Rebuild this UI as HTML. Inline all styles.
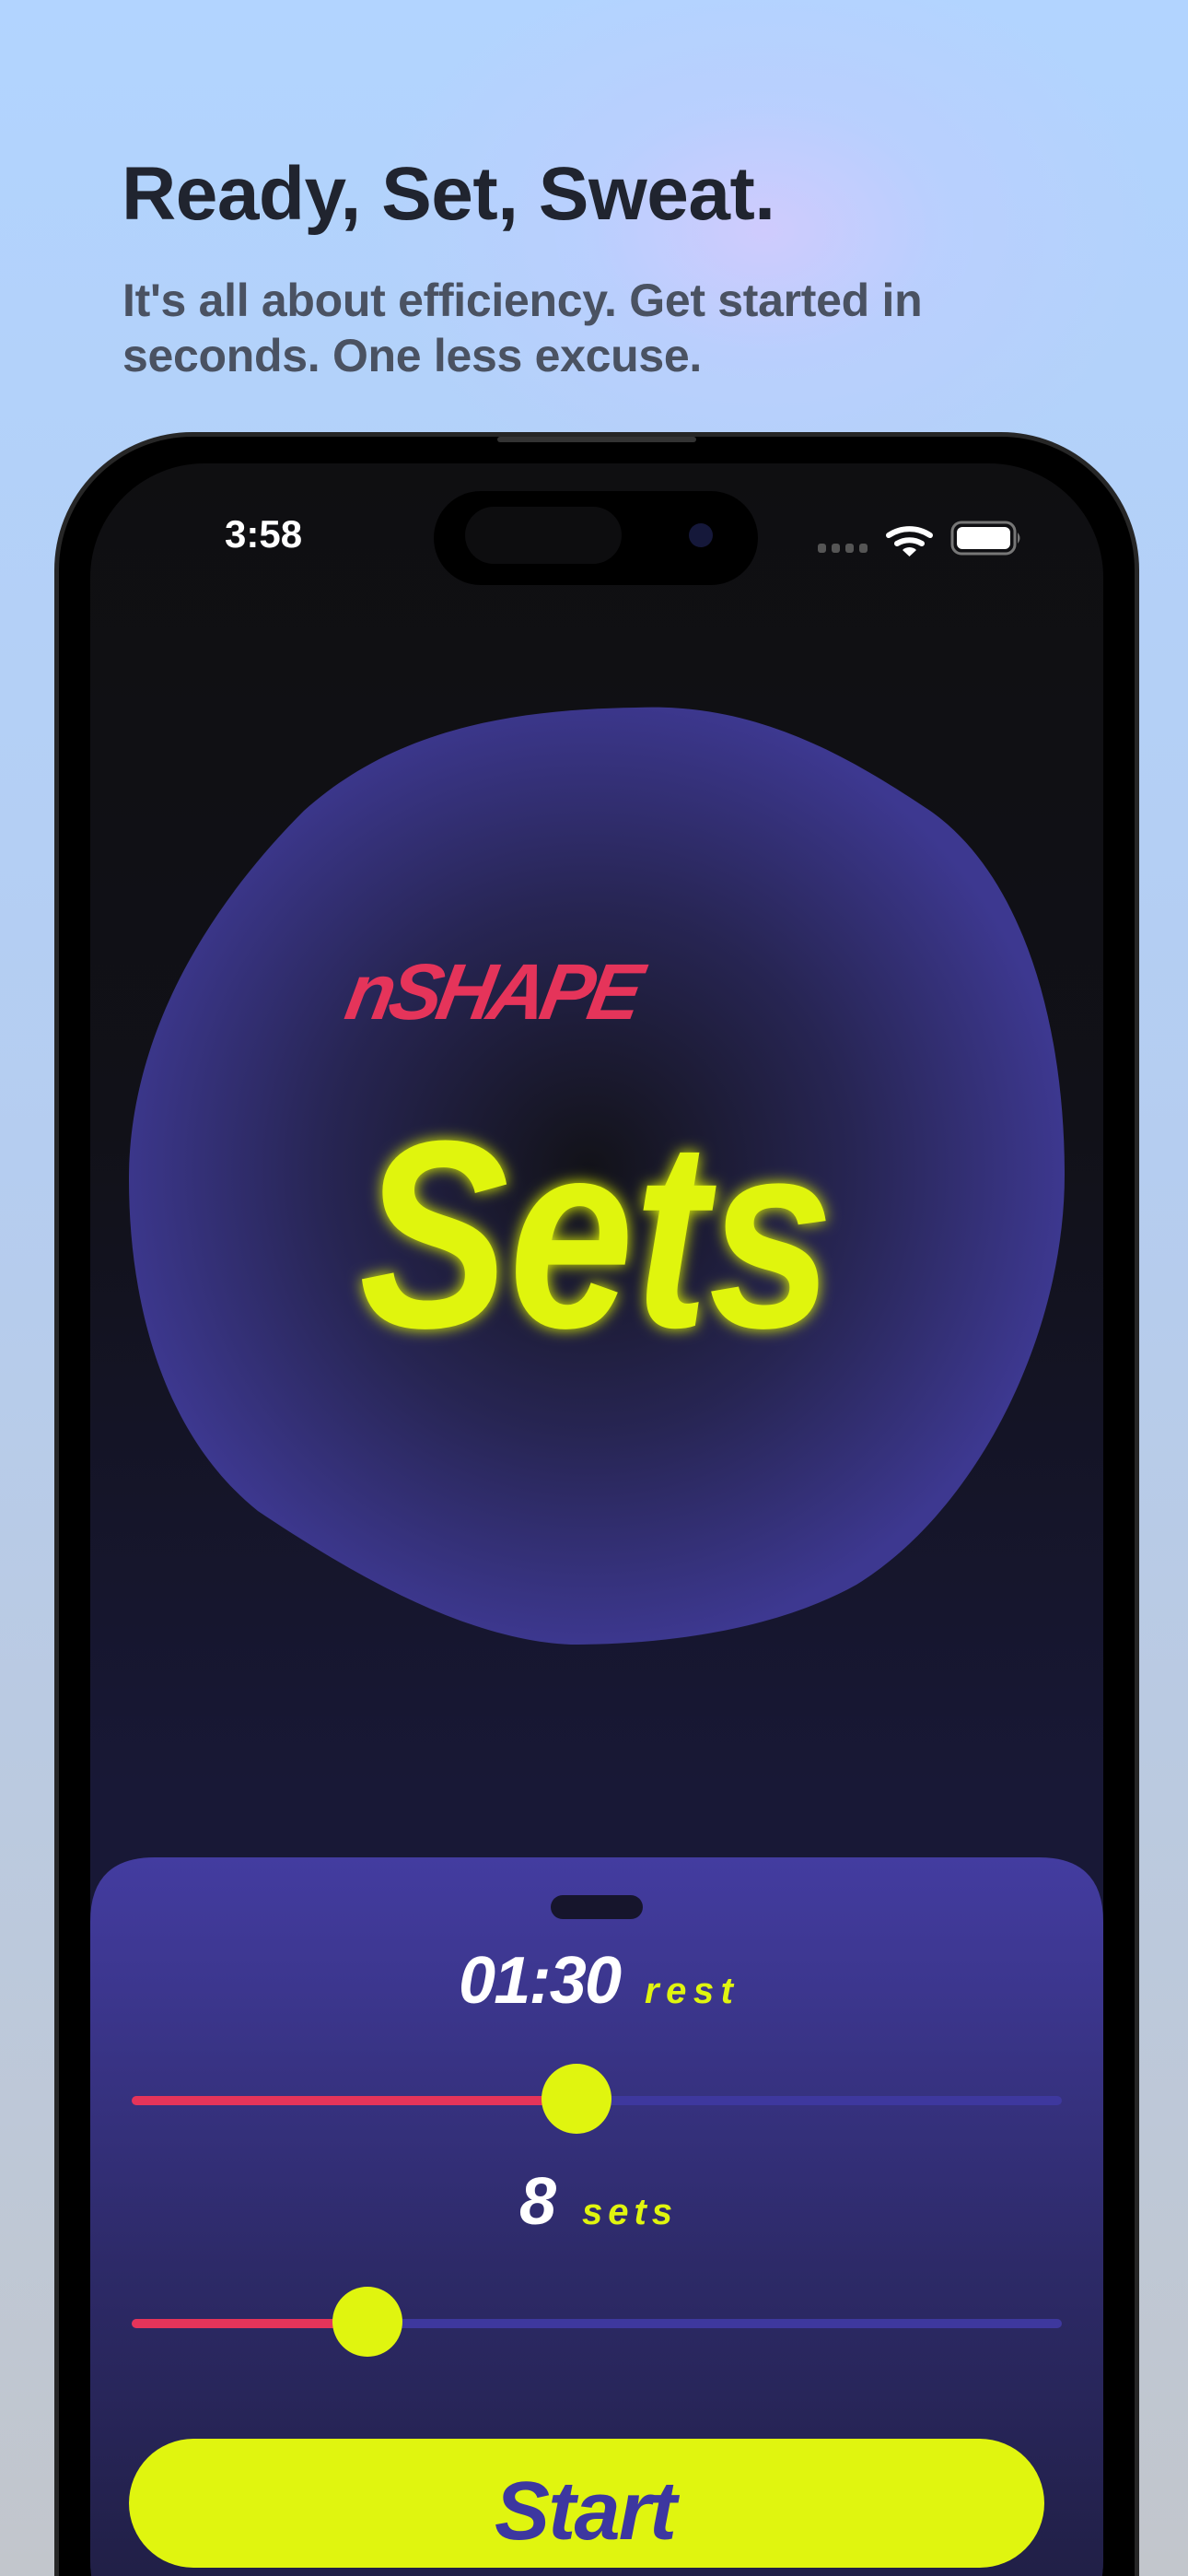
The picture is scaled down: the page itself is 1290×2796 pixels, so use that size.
<!DOCTYPE html>
<html><head><meta charset="utf-8"><style>
*{margin:0;padding:0;box-sizing:border-box}
html,body{width:1290px;height:2796px;overflow:hidden}
body{position:relative;font-family:"Liberation Sans",sans-serif;
background:radial-gradient(ellipse 420px 300px at 830px 250px,#cfcbfd 0%,rgba(190,205,255,0.6) 45%,rgba(178,212,255,0) 100%),linear-gradient(180deg,#b2d4ff 0%,#b5cdf0 45%,#c2c6cc 100%);}
.wrap{position:absolute;left:0;top:0;width:1290px;height:2796px;overflow:hidden}
.t{position:absolute;left:132px;top:164px;font-size:82px;font-weight:bold;color:#20242f;letter-spacing:-0.5px}
.s{position:absolute;left:133px;top:296px;font-size:50px;font-weight:bold;color:#4a5262;line-height:60px;width:1150px;letter-spacing:-0.3px;white-space:nowrap}
.phone{position:absolute;left:59px;top:469px;width:1178px;height:2500px;background:#000;border-radius:150px;border:5px solid #262626}
.screen{position:absolute;left:98px;top:503px;width:1100px;height:2400px;border-radius:124px;overflow:hidden;background:linear-gradient(180deg,#0f0f11 0%,#111118 30%,#181836 60%,#1c1c3a 100%)}
.island{position:absolute;left:471px;top:533px;width:352px;height:102px;border-radius:51px;background:#000}
</style></head><body><div class="wrap">
<div class="t">Ready, Set, Sweat.</div>
<div class="s">It's all about efficiency. Get started in<br>seconds. One less excuse.</div>
<div class="phone"></div>
<div style="position:absolute;left:540px;top:474px;width:216px;height:6px;background:#333;border-radius:3px"></div>
<div class="screen">
<svg width="1100" height="2400" style="position:absolute;left:0;top:0" viewBox="98 503 1100 2400">
<defs>
<radialGradient id="bg" cx="640" cy="1270" r="520" gradientUnits="userSpaceOnUse">
<stop offset="0" stop-color="#121218"/><stop offset="0.55" stop-color="#272553"/><stop offset="1" stop-color="#3d3890"/></radialGradient>
<linearGradient id="sh" x1="0" y1="0" x2="0" y2="1"><stop offset="0" stop-color="#433ca0"/><stop offset="0.5" stop-color="#2d2a68"/><stop offset="1" stop-color="#1d1c3c"/></linearGradient>
<filter id="gl" x="-20%" y="-20%" width="140%" height="140%"><feGaussianBlur stdDeviation="8" result="b"/><feMerge><feMergeNode in="b"/><feMergeNode in="SourceGraphic"/></feMerge></filter>
</defs>
<path d="M690 768 C820 762 920 820 1010 880 C1110 950 1156 1110 1156 1275 C1156 1450 1060 1640 930 1720 C840 1770 720 1785 620 1785 C500 1780 370 1700 280 1640 C180 1560 140 1420 140 1280 C140 1120 230 980 330 880 C430 790 560 770 690 768Z" fill="url(#bg)"/>
<text x="372" y="1106" font-family="Liberation Sans" font-weight="bold" font-style="italic" font-size="86" fill="#e5345a" transform="skewX(-10) translate(195 0)" textLength="320">nSHAPE</text>
<text x="390" y="1440" font-family="Liberation Sans" font-weight="bold" font-style="italic" font-size="290" fill="#e0f50f" filter="url(#gl)" textLength="515" lengthAdjust="spacingAndGlyphs">Sets</text>
<path d="M98 2086 Q98 2016 168 2016 L1128 2016 Q1198 2016 1198 2086 L1198 2903 L98 2903Z" fill="url(#sh)"/>
<rect x="598" y="2057" width="100" height="26" rx="13" fill="#16152c"/>
<text x="498" y="2174" font-family="Liberation Sans" font-weight="bold" font-style="italic" font-size="72" fill="#fff" textLength="177">01:30</text>
<text x="700" y="2174" font-family="Liberation Sans" font-weight="bold" font-style="italic" font-size="40" fill="#e0f50f" textLength="96">rest</text>
<rect x="143" y="2275" width="1010" height="10" rx="5" fill="#3e389e"/>
<rect x="143" y="2275" width="483" height="10" rx="5" fill="#e5345a"/>
<circle cx="626" cy="2278" r="38" fill="#e0f50f"/>
<text x="564" y="2414" font-family="Liberation Sans" font-weight="bold" font-style="italic" font-size="72" fill="#fff">8</text>
<text x="632" y="2414" font-family="Liberation Sans" font-weight="bold" font-style="italic" font-size="40" fill="#e0f50f" textLength="98">sets</text>
<rect x="143" y="2517" width="1010" height="10" rx="5" fill="#3e389e"/>
<rect x="143" y="2517" width="256" height="10" rx="5" fill="#e5345a"/>
<circle cx="399" cy="2520" r="38" fill="#e0f50f"/>
<rect x="140" y="2647" width="994" height="140" rx="70" fill="#e0f50f"/>
<text x="537" y="2756" font-family="Liberation Sans" font-weight="bold" font-style="italic" font-size="90" fill="#3d37a0" textLength="198">Start</text>
</svg>
</div>
<div class="island"></div>
<div style="position:absolute;left:505px;top:550px;width:170px;height:62px;border-radius:31px;background:#0d0d0f"></div>
<div style="position:absolute;left:748px;top:568px;width:26px;height:26px;border-radius:13px;background:#15183a"></div>
<div style="position:absolute;left:244px;top:556px;font-size:42px;font-weight:bold;color:#fff">3:58</div>
<svg width="300" height="60" style="position:absolute;left:880px;top:555px" viewBox="880 555 300 60">
<g fill="#555"><rect x="888" y="590" width="9" height="10" rx="3"/><rect x="903" y="590" width="9" height="10" rx="3"/><rect x="918" y="590" width="9" height="10" rx="3"/><rect x="933" y="590" width="9" height="10" rx="3"/></g>
<path d="M965 581 A40 40 0 0 1 1010 581" stroke="#fff" stroke-width="6" fill="none" stroke-linecap="round"/>
<path d="M974 590 A26 26 0 0 1 1001 590" stroke="#fff" stroke-width="6" fill="none" stroke-linecap="round"/>
<path d="M980 597 L987.5 604 L995 597 A11 11 0 0 0 980 597Z" fill="#fff"/>
<rect x="1034" y="567" width="68" height="34" rx="10" fill="none" stroke="#777" stroke-width="3"/>
<rect x="1039" y="572" width="58" height="24" rx="6" fill="#fff"/>
<path d="M1105 578 Q1110 584 1105 590Z" fill="#777"/>
</svg>
</div></body></html>
